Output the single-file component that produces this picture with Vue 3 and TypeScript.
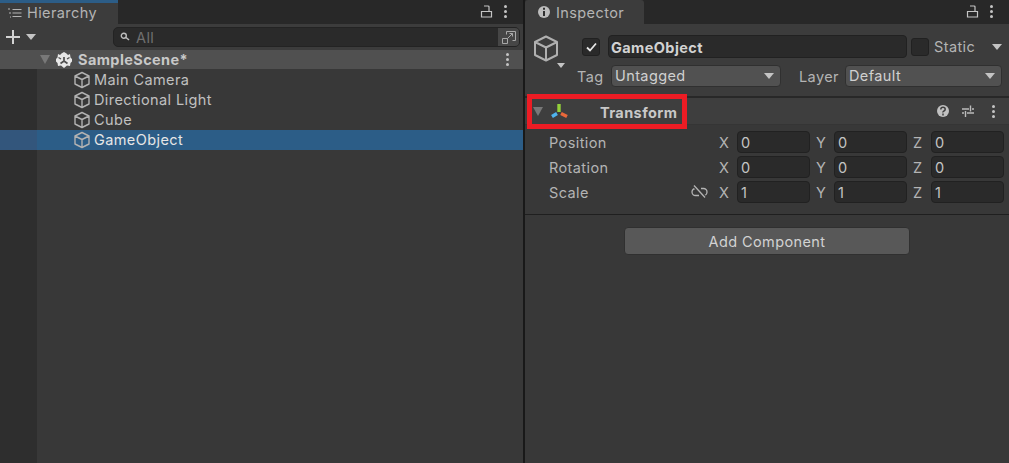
<template>
  <div class="editor">
    <section class="hierarchy">
      <div class="tabbar">
        <div class="tab hierarchy-tab">
          <svg class="tab-icon" width="14" height="12" viewBox="0 0 14 12">
            <path d="M0 2h2M1 6h2M2 10h1M4.500 2.500h9M4.500 6h9M4.500 9.500h9" stroke="#b4b4b4" fill="none" />
          </svg>
          <span>Hierarchy</span>
        </div>
        <div class="tab-actions">
          <svg width="14" height="14" viewBox="0 0 14 14">
            <path d="M1.500 7.500h10v5.500h-10zM9 7.500V3q0-1-1-1H4" stroke="#c4c4c4" stroke-width="1.200" fill="none" />
          </svg>
          <span class="dots"><i></i><i></i><i></i></span>
        </div>
      </div>
      <div class="toolbar">
        <div class="create">
          <svg width="16" height="16" viewBox="0 0 16 16">
            <path d="M8 1v14M1 8h14" stroke="#d2d2d2" stroke-width="2" />
          </svg>
          <span class="tri light"></span>
        </div>
        <div class="search">
          <svg width="11" height="10" viewBox="0 0 11 10">
            <circle cx="3.800" cy="3.800" r="2.500" stroke="#bcbcbc" stroke-width="1.400" fill="none" />
            <path d="M6 5.500l3 2.500" stroke="#bcbcbc" stroke-width="1.600" />
          </svg>
          <span>All</span>
          <div class="search-end">
            <svg width="16" height="15" viewBox="0 0 16 15">
              <path d="M5.500 4.500V1.500h9v9h-3M1.500 8.500h5v5h-5zM6.500 8.500l5-5M8.500 3.500h3v3" stroke="#a8a8a8" fill="none" />
            </svg>
          </div>
        </div>
      </div>
      <div class="tree">
        <div class="scene-row">
          <span class="tri dim"></span>
          <svg class="scene-icon" width="16" height="16" viewBox="0 0 16 16">
            <path d="M8 0l2.500 1.500L12 3l2-1 .5 3.500L16 7v2.500l-1.500 1.500-.5 3-3-.5L8 16l-3-2.500-3 .5-.5-3L0 9.500V7l1.500-1.500L2 2l2 1 1.500-1.500z" fill="#e8e8e8" />
            <path d="M8 5v4L4.500 11.500M8 9l3.500 2.500" stroke="#505050" stroke-width="1.700" fill="none" />
            <path d="M2.500 5.500L5 7M13.500 5.500L11 7" stroke="#505050" stroke-width="1.400" fill="none" />
          </svg>
          <span class="scene-name">SampleScene*</span>
          <span class="dots"><i></i><i></i><i></i></span>
        </div>
        <div
          v-for="item in sceneObjects"
          :key="item"
          class="object-row"
          :class="{ selected: item === selectedObject }"
        >
          <svg class="cube" width="18" height="18" viewBox="0 0 18 18">
            <path d="M9 1.500l7 3.500v8l-7 3.500L2 13V5zM2 5l7 3.500L16 5M9 8.500v8" stroke="#b2b2b2" stroke-width="1.400" stroke-linejoin="round" fill="none" />
          </svg>
          <span>{{ item }}</span>
        </div>
      </div>
    </section>

    <section class="inspector">
      <div class="tabbar">
        <div class="tab inspector-tab">
          <svg width="14" height="14" viewBox="0 0 14 14">
            <circle cx="7" cy="7" r="6" fill="#bdbdbd" />
            <path d="M7 2.800v2M7 6v5" stroke="#2f2f2f" stroke-width="2" />
          </svg>
          <span>Inspector</span>
        </div>
        <div class="tab-actions">
          <svg width="14" height="14" viewBox="0 0 14 14">
            <path d="M1.500 7.500h10v5.500h-10zM9 7.500V3q0-1-1-1H4" stroke="#c4c4c4" stroke-width="1.200" fill="none" />
          </svg>
          <span class="dots"><i></i><i></i><i></i></span>
        </div>
      </div>

      <div class="object-header">
        <div class="object-icon">
          <svg width="26" height="28" viewBox="0 0 26 28">
            <path d="M13 1.500l11 5.500v13l-11 5.500L2 20V7zM2 7l11 5.500L24 7M13 12.500v13" stroke="#b0b0b0" stroke-width="2" stroke-linejoin="round" fill="none" />
          </svg>
          <span class="tri light small"></span>
        </div>
        <div class="object-fields">
          <div class="name-line">
            <span class="checkbox">
              <svg width="11" height="10" viewBox="0 0 11 10">
                <path d="M1 5.500l3 3 6-7" stroke="#e6e6e6" stroke-width="1.800" fill="none" />
              </svg>
            </span>
            <div class="name-input">GameObject</div>
            <span class="checkbox static-box"></span>
            <span class="static-label">Static</span>
            <span class="tri light"></span>
          </div>
          <div class="tag-line">
            <span class="tag-label">Tag</span>
            <div class="select tag-select"><span>Untagged</span><span class="tri light"></span></div>
            <span class="layer-label">Layer</span>
            <div class="select layer-select"><span>Default</span><span class="tri light"></span></div>
          </div>
        </div>
      </div>

      <div class="component-head">
        <span class="tri dim"></span>
        <svg class="axes" width="20" height="16" viewBox="0 0 20 16">
          <path d="M10 1v8" stroke="#94d13a" stroke-width="3.400" />
          <path d="M8 10.500L3 13.500" stroke="#4fb4ee" stroke-width="3.400" />
          <path d="M12 10.500l6 3" stroke="#e9683a" stroke-width="3.400" />
        </svg>
        <span class="component-title">Transform</span>
        <div class="component-actions">
          <svg width="14" height="14" viewBox="0 0 14 14">
            <circle cx="7" cy="7" r="6" fill="#c0c0c0" />
            <path d="M4.800 5.500q0-2.200 2.200-2.200t2.200 2q0 1.200-1.200 1.700T7 8.500M7 9.500v2" stroke="#3e3e3e" stroke-width="1.500" fill="none" />
          </svg>
          <svg width="14" height="14" viewBox="0 0 14 14">
            <path d="M1 5h7M11 5h2M1 9h2M6 9h7M9.500 1.500v6M4.500 7v6" stroke="#bcbcbc" stroke-width="1.400" fill="none" />
          </svg>
          <span class="dots"><i></i><i></i><i></i></span>
        </div>
      </div>

      <div class="component-body">
        <div v-for="row in transformRows" :key="row.label" class="vector-row">
          <span class="vector-label">{{ row.label }}</span>
          <svg v-if="row.unlinked" class="unlink" width="17" height="14" viewBox="0 0 17 14">
            <path d="M6.500 3.500H4.500a3.500 3.500 0 0 0 0 7H8M10 3.500h2.500a3.500 3.500 0 0 1 0 7H11" stroke="#b4b4b4" stroke-width="1.300" fill="none" />
            <path d="M3 .5l11 12" stroke="#383838" stroke-width="3.400" fill="none" />
            <path d="M3 .5l11 12" stroke="#b4b4b4" stroke-width="1.300" fill="none" />
          </svg>
          <div v-for="axis in row.axes" :key="axis.name" class="axis">
            <span class="axis-name">{{ axis.name }}</span>
            <div class="axis-input">{{ axis.value }}</div>
          </div>
        </div>
      </div>

      <div class="add-wrap">
        <div class="add-button">Add Component</div>
      </div>

      <div class="highlight"></div>
    </section>
  </div>
</template>

<script setup lang="ts">
interface Axis {
  name: string
  value: number
}

interface TransformRow {
  label: string
  unlinked?: boolean
  axes: Axis[]
}

const sceneObjects = ['Main Camera', 'Directional Light', 'Cube', 'GameObject']
const selectedObject = 'GameObject'

const makeAxes = (value: number): Axis[] =>
  ['X', 'Y', 'Z'].map((name) => ({ name, value }))

const transformRows: TransformRow[] = [
  { label: 'Position', axes: makeAxes(0) },
  { label: 'Rotation', axes: makeAxes(0) },
  { label: 'Scale', unlinked: true, axes: makeAxes(1) }
]
</script>

<style>
html,
body {
  margin: 0;
  background: #383838;
}
</style>

<style scoped>
.editor {
  display: flex;
  width: 1009px;
  height: 463px;
  overflow: hidden;
  background: #191919;
  color: #c4c4c4;
  font-family: Inter, "Liberation Sans", sans-serif;
  font-size: 14.5px;
  letter-spacing: 0.4px;
}

.hierarchy {
  display: flex;
  flex: none;
  flex-direction: column;
  width: 523px;
  margin-right: 2px;
  background: #383838;
}

.inspector {
  position: relative;
  display: flex;
  flex: 1;
  min-width: 0;
  flex-direction: column;
  background: #383838;
}

.tabbar {
  display: flex;
  align-items: stretch;
  justify-content: space-between;
  height: 24px;
  background: #282828;
  box-sizing: border-box;
}

.tab {
  display: flex;
  align-items: center;
  gap: 5px;
  background: #3c3c3c;
  color: #b4b4b4;
  box-sizing: border-box;
}

.hierarchy-tab {
  width: 118px;
  padding: 0 0 2px 8px;
  border-top: 3px solid #2c5d87;
}

.inspector-tab {
  width: 119px;
  padding: 0 0 0 12px;
  border-radius: 3px 3px 0 0;
}

.tab-actions {
  display: flex;
  align-items: center;
  gap: 10px;
  padding-right: 16px;
  padding-bottom: 2px;
}

.dots {
  display: inline-flex;
  flex-direction: column;
  gap: 2px;
  width: 3px;
}

.dots i {
  width: 3px;
  height: 3px;
  border-radius: 50%;
  background: #c4c4c4;
}

.tri {
  display: inline-block;
  flex: none;
  width: 0;
  height: 0;
  border-left: 5px solid transparent;
  border-right: 5px solid transparent;
  border-top: 6px solid #c4c4c4;
}

.tri.dim {
  border-left-width: 5px;
  border-right-width: 5px;
  border-top: 9px solid #787878;
}

.tri.small {
  border-left-width: 4px;
  border-right-width: 4px;
  border-top-width: 5px;
}

.toolbar {
  display: flex;
  align-items: center;
  justify-content: space-between;
  height: 26px;
  background: #3c3c3c;
  box-sizing: border-box;
  padding: 0 3px 0 5px;
}

.create {
  display: flex;
  align-items: center;
  gap: 5px;
}

.search {
  display: flex;
  align-items: center;
  gap: 5px;
  width: 407px;
  height: 20px;
  padding-left: 6px;
  box-sizing: border-box;
  border: 1px solid #232323;
  border-radius: 5px;
  background: #2a2a2a;
  color: #707070;
}

.search-end {
  display: flex;
  align-items: center;
  justify-content: center;
  width: 21px;
  height: 18px;
  margin-left: auto;
  background: #464646;
  border-radius: 0 4px 4px 0;
}

.tree {
  flex: 1;
  background: linear-gradient(to right, #2e2e2e 37px, #383838 37px);
}

.scene-row {
  display: flex;
  align-items: center;
  height: 19px;
  margin-bottom: 1px;
  padding: 0 14px 0 40px;
  background: #505050;
}

.scene-icon {
  margin-left: 6px;
}

.scene-name {
  margin-left: 6px;
  flex: 1;
  color: #c8c8c8;
  font-weight: 700;
}

.object-row {
  display: flex;
  align-items: center;
  gap: 3px;
  height: 20px;
  padding-left: 73px;
  color: #c0c0c0;
  line-height: 18px;
}

.object-row.selected {
  background: linear-gradient(to right, #33567c 37px, #2c5d87 37px);
  color: #e6e6e6;
}

.object-header {
  display: flex;
  height: 74px;
  box-sizing: border-box;
  padding: 11px 7px 0 8px;
  background: #3c3c3c;
  border-bottom: 2px solid #282828;
}

.object-icon {
  position: relative;
  width: 44px;
  flex: none;
}

.object-icon .tri {
  position: absolute;
  left: 24px;
  top: 28px;
}

.object-fields {
  display: flex;
  flex: 1;
  flex-direction: column;
  gap: 7px;
}

.name-line {
  display: flex;
  align-items: center;
  height: 23px;
}

.checkbox {
  display: flex;
  flex: none;
  align-items: center;
  justify-content: center;
  width: 16px;
  height: 16px;
  margin-left: 5px;
  border: 1px solid #212121;
  border-radius: 3px;
  background: #2a2a2a;
}

.name-input {
  flex: none;
  width: 299px;
  height: 23px;
  margin-left: 8px;
  padding-left: 2px;
  box-sizing: border-box;
  border: 1px solid #212121;
  border-radius: 4px;
  background: #2a2a2a;
  color: #d2d2d2;
  font-weight: 700;
  line-height: 23px;
}

.static-box {
  margin-left: 4px;
}

.static-label {
  margin-left: 5px;
  width: 58px;
  color: #b4b4b4;
}

.tag-line {
  display: flex;
  align-items: center;
  height: 22px;
  color: #b4b4b4;
}

.tag-label {
  width: 34px;
}

.layer-label {
  margin-left: 18px;
  width: 46px;
}

.select {
  display: flex;
  align-items: center;
  justify-content: space-between;
  height: 22px;
  padding: 0 6px 0 3px;
  box-sizing: border-box;
  border: 1px solid #303030;
  border-radius: 4px;
  background: #515151;
  color: #d0d0d0;
}

.select span:first-child {
  margin-bottom: 2px;
}

.tag-select {
  width: 170px;
}

.layer-select {
  width: 157px;
}

.component-head {
  display: flex;
  align-items: center;
  height: 27px;
  padding: 0 14px 0 8px;
  box-sizing: border-box;
  background: #3e3e3e;
  border-bottom: 1px solid #353535;
}

.axes {
  margin-left: 6px;
}

.component-title {
  margin-left: 31px;
  margin-top: 2px;
  color: #c8c8c8;
  font-weight: 700;
  flex: 1;
}

.component-actions {
  display: flex;
  align-items: center;
  gap: 11px;
}

.component-actions .dots {
  margin-left: 6px;
}

.component-body {
  display: flex;
  flex-direction: column;
  gap: 3px;
  padding: 6px 5px 11px 24px;
  border-bottom: 1px solid #1f1f1f;
}

.vector-row {
  position: relative;
  display: flex;
  align-items: center;
  height: 22px;
  color: #b4b4b4;
}

.vector-label {
  flex: none;
  width: 170px;
}

.unlink {
  position: absolute;
  left: 142px;
  top: 4px;
}

.axis {
  display: flex;
  align-items: center;
  margin-right: 6px;
}

.axis:last-child {
  margin-right: 0;
}

.axis-name {
  width: 18px;
}

.axis-input {
  width: 73px;
  height: 22px;
  padding-left: 3px;
  box-sizing: border-box;
  border: 1px solid #212121;
  border-radius: 4px;
  background: #2a2a2a;
  color: #c4c4c4;
  line-height: 22px;
}

.add-wrap {
  display: flex;
  padding: 12px 0 0 99px;
}

.add-button {
  width: 286px;
  height: 28px;
  box-sizing: border-box;
  border: 1px solid #303030;
  border-radius: 4px;
  background: #585858;
  color: #d2d2d2;
  line-height: 28px;
  text-align: center;
}

.highlight {
  position: absolute;
  left: 2px;
  top: 94px;
  width: 160px;
  height: 35px;
  box-sizing: border-box;
  border: 5px solid #ed1c24;
  pointer-events: none;
}
</style>
